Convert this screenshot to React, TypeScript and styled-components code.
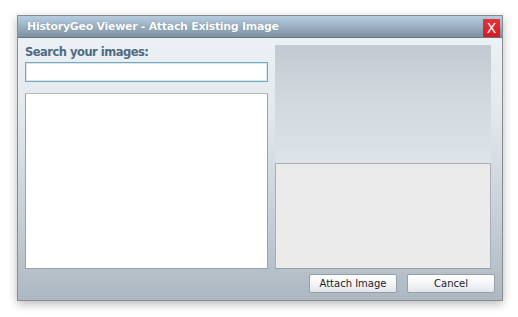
import React from "react";
import styled, { createGlobalStyle } from "styled-components";

const Global = createGlobalStyle`
  html, body { margin: 0; padding: 0; background: #ffffff; }
  body { width: 518px; height: 317px; overflow: hidden; }
`;

const Page = styled.div`
  padding: 15px 0 0 17px;
`;

const Dialog = styled.div`
  width: 486px;
  height: 286px;
  box-sizing: border-box;
  border: 1px solid #878c91;
  box-shadow: 0 3px 9px rgba(0, 0, 0, 0.28);
  background: linear-gradient(to bottom, #eef3f6 0%, #e2e8ed 35%, #c7d0d8 70%, #adb8c2 100%);
  display: flex;
  flex-direction: column;
  font-family: "DejaVu Sans", Verdana, sans-serif;
`;

const TitleBar = styled.div`
  height: 21px;
  flex: none;
  background: linear-gradient(to bottom, #b6cde0 0%, #9db3c6 45%, #7f909f 100%);
  border-bottom: 1px solid #69757f;
  display: flex;
  align-items: center;
  justify-content: space-between;
  padding: 0 2px 0 9px;
`;

const Title = styled.div`
  color: #ffffff;
  font-weight: bold;
  font-size: 11px;
  letter-spacing: -0.3px;
  text-shadow: 0 0 1px rgba(60, 80, 100, 0.6);
`;

const CloseButton = styled.div`
  width: 17px;
  height: 18px;
  margin-top: 3px;
  background: linear-gradient(to bottom, #e8313a, #d41b24);
  color: #ffffff;
  font-family: "DejaVu Sans", Verdana, sans-serif;
  font-size: 14px;
  line-height: 18px;
  text-align: center;
`;

const Body = styled.div`
  flex: 1;
  display: flex;
  flex-direction: column;
  padding: 7px 10px 7px 7px;
`;

const Columns = styled.div`
  display: flex;
  gap: 7px;
  height: 224px;
`;

const LeftCol = styled.div`
  width: 243px;
  display: flex;
  flex-direction: column;
`;

const Label = styled.div`
  height: 17px;
  color: #4f6b82;
  font-weight: bold;
  font-size: 11.5px;
  letter-spacing: -0.5px;
  line-height: 15px;
`;

const SearchInput = styled.input`
  box-sizing: border-box;
  width: 243px;
  height: 20px;
  margin: 0;
  border: 1px solid #75a9bb;
  box-shadow: inset 0 0 0 1px #d6e8ee;
  background: #ffffff;
  outline: none;
`;

const ListBox = styled.div`
  margin-top: 11px;
  flex: 1;
  background: #ffffff;
  border: 1px solid #9aa3ab;
  border-top-color: #b4bcc3;
`;

const RightCol = styled.div`
  width: 216px;
  display: flex;
  flex-direction: column;
`;

const Preview = styled.div`
  height: 118px;
  background: linear-gradient(to bottom, #c3cad1 0%, #d2d9df 50%, #dee4e9 100%);
`;

const InfoBox = styled.div`
  flex: 1;
  background: #ebebeb;
  border: 1px solid #a7aeb5;
  border-bottom-color: #979ea5;
`;

const ButtonRow = styled.div`
  display: flex;
  justify-content: flex-end;
  gap: 10px;
  margin-top: 5px;
  margin-right: -3px;
`;

const Button = styled.button`
  width: 88px;
  height: 19px;
  box-sizing: border-box;
  margin: 0;
  padding: 0;
  border: 1px solid #97a0a8;
  border-radius: 2px;
  background: linear-gradient(to bottom, #ffffff 0%, #f3f5f7 50%, #e2e6ea 100%);
  color: #1c2328;
  font-family: "DejaVu Sans", Verdana, sans-serif;
  font-size: 10px;
  line-height: 17px;
`;

export default function App() {
  return (
    <>
      <Global />
      <Page>
        <Dialog>
          <TitleBar>
            <Title>HistoryGeo Viewer - Attach Existing Image</Title>
            <CloseButton>X</CloseButton>
          </TitleBar>
          <Body>
            <Columns>
              <LeftCol>
                <Label>Search your images:</Label>
                <SearchInput type="text" />
                <ListBox />
              </LeftCol>
              <RightCol>
                <Preview />
                <InfoBox />
              </RightCol>
            </Columns>
            <ButtonRow>
              <Button>Attach Image</Button>
              <Button>Cancel</Button>
            </ButtonRow>
          </Body>
        </Dialog>
      </Page>
    </>
  );
}
